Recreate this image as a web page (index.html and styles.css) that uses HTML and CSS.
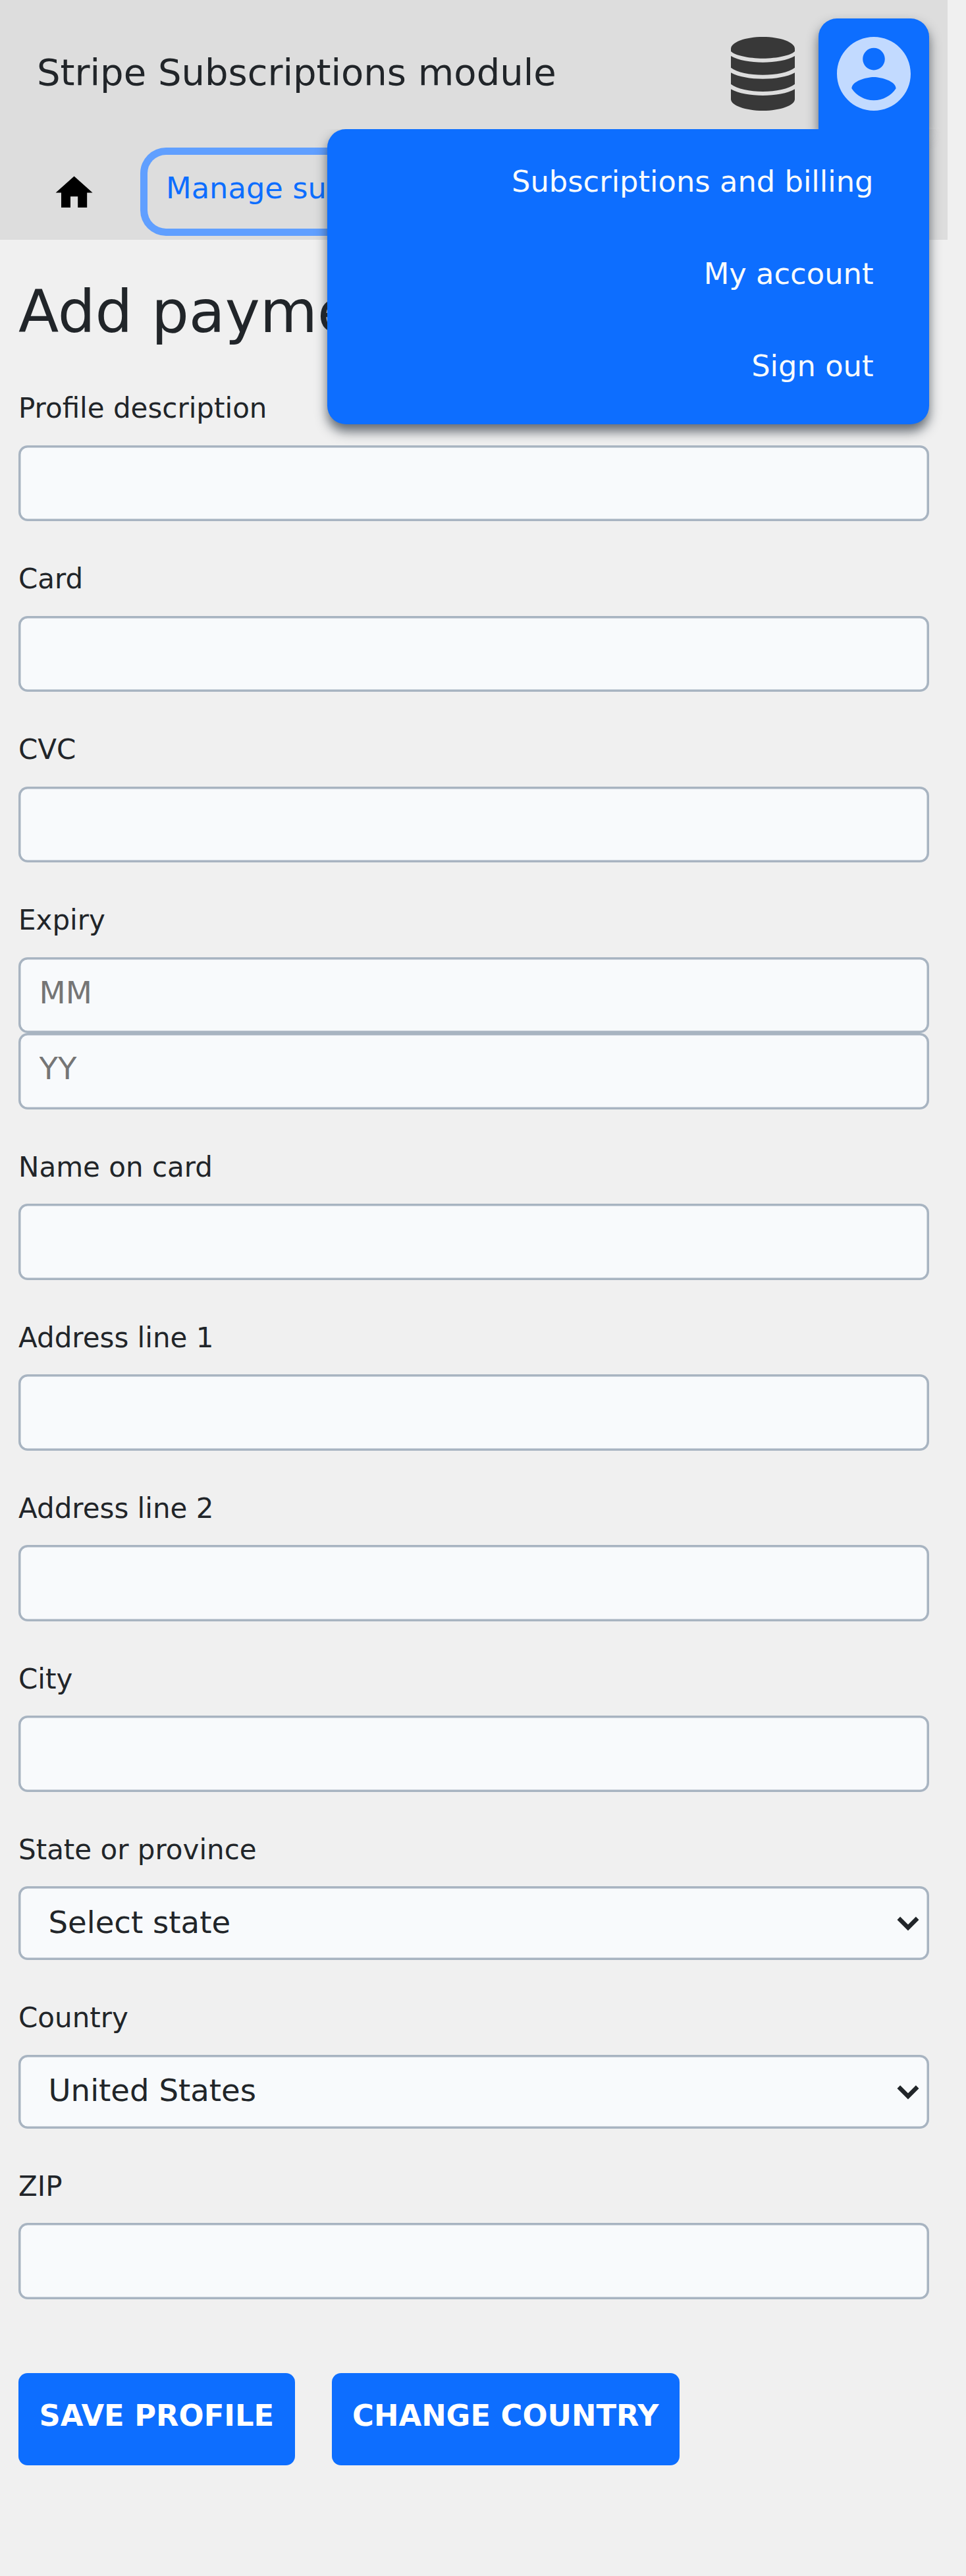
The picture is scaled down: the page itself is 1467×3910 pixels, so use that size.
FILE: index.html
```html
<!DOCTYPE html>
<html lang="en">
<head>
<meta charset="utf-8">
<title>Add payment profile</title>
<link rel="stylesheet" href="styles.css">
</head>
<body>
<header class="header">
  <div class="topbar">
    <span class="brand">Stripe Subscriptions module</span>
    <svg class="db-icon" viewBox="0 0 97 112" fill="#383838">
      <path d="M0 18C0 8 22 0 48.500 0S97 8 97 18V22C91 28 70 32.700 48.500 32.700S6 28 0 22Z"/>
      <path d="M0 29C11 35.500 30 38.700 48.500 38.700S86 35.500 97 29V46.700C88 54 68 57.700 48.500 57.700S9 54 0 46.700Z"/>
      <path d="M0 54.200C11 60.500 30 63.700 48.500 63.700S86 60.500 97 54.200V71.800C88 79 68 83 48.500 83S9 79 0 71.800Z"/>
      <path d="M0 79.300C11 85.700 30 89 48.500 89S86 85.700 97 79.300V94.500C97 104 75 112 48.500 112S0 104 0 94.500Z"/>
    </svg>
    <div class="account">
      <svg class="account-icon" viewBox="2 2 20 20" fill="#c2daff"><path d="M12 2C6.480 2 2 6.480 2 12s4.480 10 10 10 10-4.480 10-10S17.520 2 12 2zm0 3c1.660 0 3 1.340 3 3s-1.340 3-3 3-3-1.340-3-3 1.340-3 3-3zm0 14.200c-2.500 0-4.710-1.280-6-3.220.03-1.990 4-3.080 6-3.080 1.990 0 5.970 1.090 6 3.080-1.290 1.940-3.500 3.220-6 3.220z"/></svg>
      <nav class="menu">
        <a>Subscriptions and billing</a>
        <a>My account</a>
        <a>Sign out</a>
      </nav>
    </div>
  </div>
  <nav class="navbar">
    <svg class="home-icon" viewBox="0 0 24 24"><path d="M10 20v-6h4v6h5v-8h3L12 3 2 12h3v8z"/></svg>
    <a class="nav-link">Manage subscriptions</a>
  </nav>
</header>
<main class="content">
  <h1>Add payment profile</h1>
  <form class="form">
    <div class="field"><label>Profile description</label><input type="text"></div>
    <div class="field"><label>Card</label><input type="text"></div>
    <div class="field"><label>CVC</label><input type="text"></div>
    <div class="field"><label>Expiry</label><input type="text" placeholder="MM"><input type="text" placeholder="YY"></div>
    <div class="field"><label>Name on card</label><input type="text"></div>
    <div class="field"><label>Address line 1</label><input type="text"></div>
    <div class="field"><label>Address line 2</label><input type="text"></div>
    <div class="field"><label>City</label><input type="text"></div>
    <div class="field"><label>State or province</label>
      <div class="select"><select><option>Select state</option></select><svg class="chevron" viewBox="0 0 34 22"><path d="M2.800 2.600l14.200 14.200L31.200 2.600"/></svg></div></div>
    <div class="field"><label>Country</label>
      <div class="select"><select><option>United States</option></select><svg class="chevron" viewBox="0 0 34 22"><path d="M2.800 2.600l14.200 14.200L31.200 2.600"/></svg></div></div>
    <div class="field"><label>ZIP</label><input type="text"></div>
    <div class="actions">
      <button type="button">SAVE PROFILE</button>
      <button type="button">CHANGE COUNTRY</button>
    </div>
  </form>
</main>
</body>
</html>
```

FILE: styles.css
```css
* { box-sizing: border-box; }
body {
  margin: 0;
  min-height: 3910px;
  background: #f0f0f0;
  color: #212529;
  font-family: "DejaVu Sans", sans-serif;
}
svg { display: block; flex: none; }

.header { width: 1438.5px; height: 364px; background: #ddd; }
.topbar {
  display: flex;
  align-items: flex-start;
  height: 196px;
  padding: 28px 28px 0 56px;
}
.brand { flex: 1; font-size: 56px; line-height: 84px; padding-top: 40px; white-space: nowrap; }
.db-icon { width: 97px; height: 112px; margin: 28px 35.5px 0 0; }
.account {
  position: relative;
  z-index: 2;
  width: 168px;
  height: 168px;
  padding: 28px;
  background: #0d6eff;
  border-radius: 28px 28px 0 0;
  box-shadow: 0 10.5px 17.5px rgba(33, 43, 54, .68);
}
.account-icon { width: 112px; height: 112px; }
.menu {
  position: absolute;
  top: 168px;
  right: 0;
  width: 913.5px;
  height: 448px;
  padding: 14px 84px 0;
  background: #0d6eff;
  border-radius: 28px 0 28px 28px;
  box-shadow: 0 10.5px 17.5px rgba(33, 43, 54, .68);
  clip-path: inset(0 -40px -60px -40px);
}
.menu a {
  display: block;
  height: 140px;
  line-height: 131px;
  color: #f8fafc;
  font-size: 44.8px;
  text-align: right;
  white-space: nowrap;
}

.navbar { display: flex; padding: 38.5px 0 0 78.5px; }
.home-icon { width: 67.2px; height: 67.2px; margin-top: 24px; }
.nav-link {
  height: 112px;
  margin-left: 78.3px;
  padding: 0 28px;
  border-radius: 28px;
  box-shadow: 0 0 0 11px #609fff;
  color: #0d6eff;
  font-size: 44.8px;
  line-height: 102px;
}

.content { width: 1438.5px; padding: 53px 28px 0; }
h1 { margin: 0 0 59px; font-size: 89.6px; font-weight: 400; line-height: 112px; }
.field { display: flex; flex-direction: column; margin-bottom: 56px; }
label { font-size: 42px; line-height: 63px; margin-bottom: 24.5px; }
input, select {
  width: 100%;
  height: 115.5px;
  margin: 0;
  border: 0;
  border-radius: 14px;
  padding: 0 31.5px 7px;
  background: #f8fafc;
  box-shadow: inset 0 0 0 3.5px #a8b4c1;
  color: #212529;
  font: 46.6px "DejaVu Sans", sans-serif;
  outline: none;
}
input::placeholder { color: #757575; opacity: 1; }
.select { display: grid; align-items: start; }
.select > * { grid-area: 1 / 1; }
select { height: 112px; padding: 0 45.5px 3px; appearance: none; }
.chevron {
  justify-self: end;
  width: 34px;
  height: 22px;
  margin: 46.3px 14.5px 0 0;
  fill: none;
  stroke: #212529;
  stroke-width: 6.5;
  overflow: visible;
}
.actions { display: flex; gap: 56px; padding-top: 56px; }
button {
  height: 140px;
  padding: 0 31.5px 10px;
  border: 0;
  border-radius: 14px;
  background: #0d6eff;
  color: #fff;
  font: bold 44.8px "DejaVu Sans", sans-serif;
  white-space: nowrap;
}
```
